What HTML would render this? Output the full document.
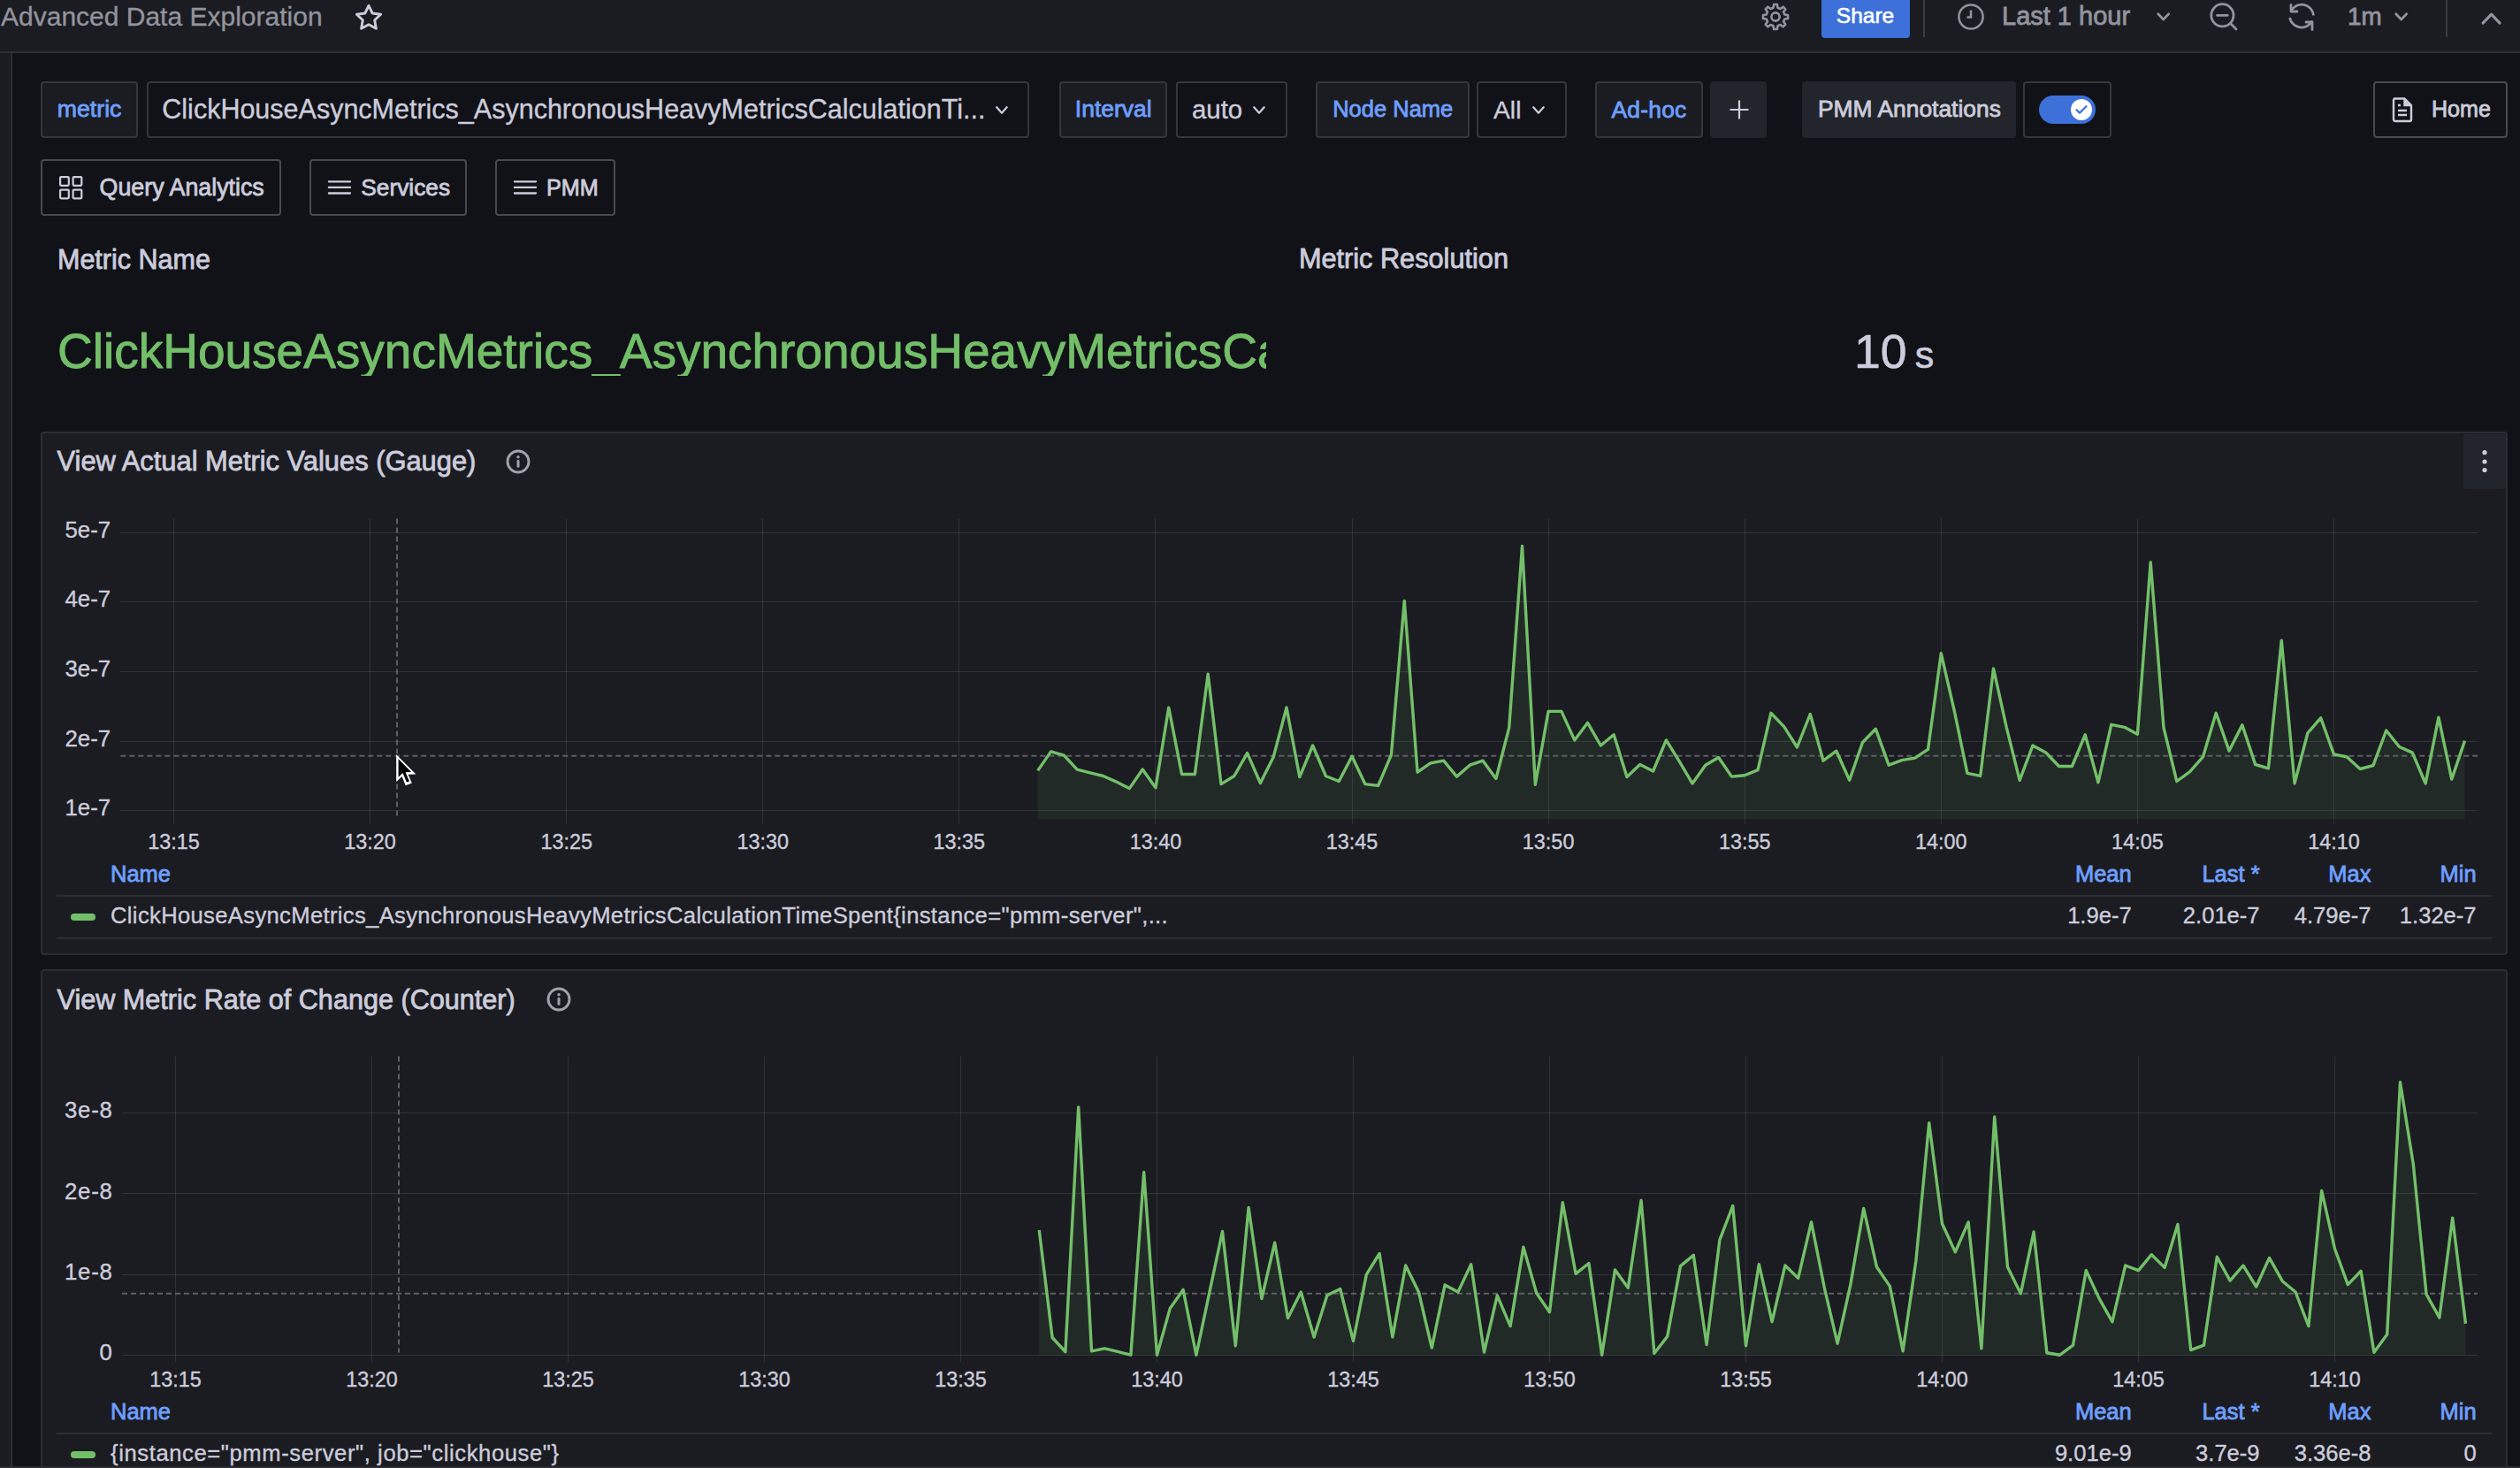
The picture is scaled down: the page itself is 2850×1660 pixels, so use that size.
<!DOCTYPE html>
<html><head><meta charset="utf-8"><style>
html,body{margin:0;padding:0;}
body{width:2850px;height:1660px;overflow:hidden;position:relative;background:#111217;font-family:"Liberation Sans",sans-serif;}
.t{position:absolute;white-space:nowrap;line-height:1;}
.r{position:absolute;}
svg.r{overflow:visible;}
</style></head><body>
<div class="r" style="left:0.00px;top:0.00px;width:2850.00px;height:58.00px;background:#1b1c21;"></div>
<div class="r" style="left:0.00px;top:58.00px;width:2850.00px;height:2.00px;background:#2c2e35;"></div>
<div class="r" style="left:0.00px;top:60.00px;width:12.00px;height:1600.00px;background:#1b1c21;"></div>
<div class="r" style="left:12.00px;top:60.00px;width:2.00px;height:1600.00px;background:#2c2e35;"></div>
<div class="r" style="left:0.00px;top:1658.00px;width:2850.00px;height:2.00px;background:#2c2d33;"></div>
<div class="t" style="top:4.00px;font-size:30.00px;color:#92939e;-webkit-text-stroke:0.35px #92939e;left:1.00px;">Advanced Data Exploration</div>
<svg class="r" style="left:399px;top:3px" width="36" height="33" viewBox="0 0 36 33"><path d="M18 3.4 L22.2 12 L31.6 13.3 L24.7 19.8 L26.4 29.2 L18 24.7 L9.6 29.2 L11.3 19.8 L4.4 13.3 L13.8 12 Z" fill="none" stroke="#ccccdc" stroke-width="2.9" stroke-linejoin="round"/></svg>
<svg class="r" style="left:1987.5px;top:-1.25px" width="40" height="40"><path d="M30.31 17.53 L34.07 18.11 L34.07 21.89 L30.31 22.47 L29.04 25.54 L31.29 28.61 L28.61 31.29 L25.54 29.04 L22.47 30.31 L21.89 34.07 L18.11 34.07 L17.53 30.31 L14.46 29.04 L11.39 31.29 L8.71 28.61 L10.96 25.54 L9.69 22.47 L5.93 21.89 L5.93 18.11 L9.69 17.53 L10.96 14.46 L8.71 11.39 L11.39 8.71 L14.46 10.96 L17.53 9.69 L18.11 5.93 L21.89 5.93 L22.47 9.69 L25.54 10.96 L28.61 8.71 L31.29 11.39 L29.04 14.46 Z" fill="none" stroke="#92939e" stroke-width="2.6" stroke-linejoin="round"/><circle cx="20" cy="20" r="4.6" fill="none" stroke="#92939e" stroke-width="2.6"/></svg>
<div class="r" style="left:2060.00px;top:0.00px;width:100.00px;height:43.00px;background:#3d71d9;border-radius:0 0 4px 4px;"></div>
<div class="t" style="top:6.36px;font-size:24.50px;color:#ffffff;-webkit-text-stroke:0.6px #ffffff;left:2109.50px;transform:translateX(-50%);">Share</div>
<div class="r" style="left:2175.00px;top:0.00px;width:2.00px;height:42.00px;background:#3a3b41;"></div>
<svg class="r" style="left:2213px;top:3px" width="32" height="32" viewBox="0 0 32 32"><circle cx="16" cy="16" r="13.6" fill="none" stroke="#92939e" stroke-width="2.5"/><path d="M16 8.5 V16.5 H11.5" fill="none" stroke="#92939e" stroke-width="2.5"/></svg>
<div class="t" style="top:4.45px;font-size:29.00px;color:#92939e;-webkit-text-stroke:0.8px #92939e;left:2264.00px;">Last 1 hour</div>
<svg class="r" style="left:2438.3px;top:12.8px" width="17.4" height="11.7"><path d="M2.7 2.7 L8.7 9.0 L14.7 2.7" fill="none" stroke="#92939e" stroke-width="2.7" stroke-linecap="round" stroke-linejoin="round"/></svg>
<svg class="r" style="left:2496px;top:0px" width="40" height="40" viewBox="0 0 40 40"><circle cx="17.4" cy="17.3" r="12.6" fill="none" stroke="#92939e" stroke-width="2.8"/><path d="M11.5 17.3 H23.3 M26.6 26.6 L33 33" fill="none" stroke="#92939e" stroke-width="2.8" stroke-linecap="round"/></svg>
<svg class="r" style="left:2585px;top:1px" width="36" height="36" viewBox="0 0 36 36"><path d="M6 11.5 A13.5 13.5 0 0 1 31.5 16.5" fill="none" stroke="#92939e" stroke-width="2.8"/><path d="M30 22.5 A13.5 13.5 0 0 1 4.6 19" fill="none" stroke="#92939e" stroke-width="2.8"/><path d="M6 4.5 V12 H13" fill="none" stroke="#92939e" stroke-width="2.8" stroke-linejoin="round" stroke-linecap="round"/><path d="M30 32.5 V24 H23" fill="none" stroke="#92939e" stroke-width="2.8" stroke-linejoin="round" stroke-linecap="round"/></svg>
<div class="t" style="top:5.06px;font-size:27.80px;color:#92939e;-webkit-text-stroke:0.8px #92939e;left:2655.00px;">1m</div>
<svg class="r" style="left:2707.3px;top:12.8px" width="17.4" height="11.7"><path d="M2.7 2.7 L8.7 9.0 L14.7 2.7" fill="none" stroke="#92939e" stroke-width="2.7" stroke-linecap="round" stroke-linejoin="round"/></svg>
<div class="r" style="left:2766.00px;top:0.00px;width:2.00px;height:42.00px;background:#3a3b41;"></div>
<svg class="r" style="left:2805.4px;top:12.9px" width="25.2" height="16.2"><path d="M3.1 13.1 L12.6 3.1 L22.1 13.1" fill="none" stroke="#92939e" stroke-width="3.1" stroke-linecap="round" stroke-linejoin="round"/></svg>
<div class="r" style="left:46.00px;top:92.00px;width:110.00px;height:64.00px;background:#1b1c21;border:2px solid #34363d;box-sizing:border-box;border-radius:4px;"></div>
<div class="t" style="top:109.59px;font-size:26.70px;color:#6e9fff;-webkit-text-stroke:0.8px #6e9fff;left:64.80px;">metric</div>
<div class="r" style="left:166.00px;top:92.00px;width:998.00px;height:64.00px;background:#111217;border:2px solid #34363d;box-sizing:border-box;border-radius:4px;"></div>
<div class="t" style="top:108.38px;font-size:30.50px;color:#ccccdc;-webkit-text-stroke:0.35px #ccccdc;left:183.30px;">ClickHouseAsyncMetrics_AsynchronousHeavyMetricsCalculationTi...</div>
<svg class="r" style="left:1124.8px;top:118.8px" width="15.9" height="10.9"><path d="M2.2 2.2 L7.95 8.7 L13.7 2.2" fill="none" stroke="#ccccdc" stroke-width="2.2" stroke-linecap="round" stroke-linejoin="round"/></svg>
<div class="r" style="left:1198.00px;top:92.00px;width:122.00px;height:64.00px;background:#1b1c21;border:2px solid #34363d;box-sizing:border-box;border-radius:4px;"></div>
<div class="t" style="top:109.76px;font-size:26.50px;color:#6e9fff;-webkit-text-stroke:0.8px #6e9fff;left:1215.80px;">Interval</div>
<div class="r" style="left:1330.00px;top:92.00px;width:126.00px;height:64.00px;background:#111217;border:2px solid #34363d;box-sizing:border-box;border-radius:4px;"></div>
<div class="t" style="top:109.31px;font-size:29.40px;color:#ccccdc;-webkit-text-stroke:0.35px #ccccdc;left:1348.00px;">auto</div>
<svg class="r" style="left:1416.3px;top:118.8px" width="15.9" height="10.9"><path d="M2.2 2.2 L7.95 8.7 L13.7 2.2" fill="none" stroke="#ccccdc" stroke-width="2.2" stroke-linecap="round" stroke-linejoin="round"/></svg>
<div class="r" style="left:1488.00px;top:92.00px;width:174.00px;height:64.00px;background:#1b1c21;border:2px solid #34363d;box-sizing:border-box;border-radius:4px;"></div>
<div class="t" style="top:110.61px;font-size:25.50px;color:#6e9fff;-webkit-text-stroke:0.8px #6e9fff;left:1507.20px;">Node Name</div>
<div class="r" style="left:1670.00px;top:92.00px;width:102.00px;height:64.00px;background:#111217;border:2px solid #34363d;box-sizing:border-box;border-radius:4px;"></div>
<div class="t" style="top:110.24px;font-size:28.30px;color:#ccccdc;-webkit-text-stroke:0.35px #ccccdc;left:1689.00px;">All</div>
<svg class="r" style="left:1732.3px;top:118.8px" width="15.9" height="10.9"><path d="M2.2 2.2 L7.95 8.7 L13.7 2.2" fill="none" stroke="#ccccdc" stroke-width="2.2" stroke-linecap="round" stroke-linejoin="round"/></svg>
<div class="r" style="left:1804.00px;top:92.00px;width:122.00px;height:64.00px;background:#1b1c21;border:2px solid #34363d;box-sizing:border-box;border-radius:4px;"></div>
<div class="t" style="top:110.65px;font-size:26.40px;color:#6e9fff;-webkit-text-stroke:0.8px #6e9fff;letter-spacing:0.25px;left:1822.40px;">Ad-hoc</div>
<div class="r" style="left:1934.00px;top:92.00px;width:64.00px;height:64.00px;background:#22252b;border-radius:4px;"></div>
<svg class="r" style="left:1956px;top:113px" width="22" height="22"><path d="M11 0.5 V21.5 M0.5 11 H21.5" stroke="#ccccdc" stroke-width="2.2"/></svg>
<div class="r" style="left:2038.00px;top:92.00px;width:242.00px;height:64.00px;background:#22252b;border-radius:4px;"></div>
<div class="t" style="top:109.85px;font-size:26.40px;color:#ccccdc;-webkit-text-stroke:0.8px #ccccdc;left:2056.00px;">PMM Annotations</div>
<div class="r" style="left:2288.00px;top:92.00px;width:100.00px;height:64.00px;background:#111217;border:2px solid #34363d;box-sizing:border-box;border-radius:4px;"></div>
<div class="r" style="left:2306.00px;top:108.00px;width:64.00px;height:32.00px;background:#3d71d9;border-radius:16px;"></div>
<svg class="r" style="left:2341px;top:111px" width="26" height="26" viewBox="0 0 26 26"><circle cx="13" cy="13" r="12" fill="#ffffff"/><path d="M7.5 13.3 L11 16.6 L18.5 9.2" fill="none" stroke="#3d71d9" stroke-width="2.2" stroke-linecap="round" stroke-linejoin="round"/></svg>
<div class="r" style="left:2684.00px;top:92.00px;width:152.00px;height:64.00px;background:#111217;border:2px solid #484951;box-sizing:border-box;border-radius:4px;"></div>
<svg class="r" style="left:2704px;top:109px" width="26" height="30" viewBox="0 0 26 30"><path d="M4 2.5 H15.5 L23 10 V26 A2 2 0 0 1 21 28 H5 A2 2 0 0 1 3 26 V4.5 A2 2 0 0 1 5 2.5 Z" fill="none" stroke="#ccccdc" stroke-width="2.4" stroke-linejoin="round"/><path d="M15 3 V10.5 H22.5" fill="#ccccdc" stroke="#ccccdc" stroke-width="1.5"/><path d="M8 10 H11 M8 16 H18 M8 21 H18" stroke="#ccccdc" stroke-width="2.4"/></svg>
<div class="t" style="top:111.05px;font-size:25.10px;color:#ccccdc;-webkit-text-stroke:0.8px #ccccdc;left:2750.00px;">Home</div>
<div class="r" style="left:46.00px;top:180.00px;width:272.00px;height:64.00px;border:2px solid #484951;box-sizing:border-box;border-radius:4px;"></div>
<svg class="r" style="left:67px;top:199px" width="28" height="28" viewBox="0 0 28 28"><rect x="1.1" y="1.1" width="9.7" height="9.7" rx="1" fill="none" stroke="#ccccdc" stroke-width="2.2"/><rect x="15.6" y="1.1" width="9.7" height="9.7" rx="1" fill="none" stroke="#ccccdc" stroke-width="2.2"/><rect x="1.1" y="15.6" width="9.7" height="9.7" rx="1" fill="none" stroke="#ccccdc" stroke-width="2.2"/><rect x="15.6" y="15.6" width="9.7" height="9.7" rx="1" fill="none" stroke="#ccccdc" stroke-width="2.2"/></svg>
<div class="t" style="top:198.61px;font-size:26.80px;color:#ccccdc;-webkit-text-stroke:0.8px #ccccdc;left:112.60px;">Query Analytics</div>
<div class="r" style="left:350.00px;top:180.00px;width:178.00px;height:64.00px;border:2px solid #484951;box-sizing:border-box;border-radius:4px;"></div>
<svg class="r" style="left:370px;top:202px" width="28" height="20"><path d="M1.9 3.3 H26 M1.9 9.9 H26 M1.9 16.5 H26" stroke="#ccccdc" stroke-width="2.3" stroke-linecap="round"/></svg>
<div class="t" style="top:199.03px;font-size:26.30px;color:#ccccdc;-webkit-text-stroke:0.8px #ccccdc;left:408.30px;">Services</div>
<div class="r" style="left:560.00px;top:180.00px;width:136.00px;height:64.00px;border:2px solid #484951;box-sizing:border-box;border-radius:4px;"></div>
<svg class="r" style="left:580px;top:202px" width="28" height="20"><path d="M1.9 3.3 H26 M1.9 9.9 H26 M1.9 16.5 H26" stroke="#ccccdc" stroke-width="2.3" stroke-linecap="round"/></svg>
<div class="t" style="top:199.96px;font-size:25.20px;color:#ccccdc;-webkit-text-stroke:0.8px #ccccdc;left:617.90px;">PMM</div>
<div class="t" style="top:278.18px;font-size:30.50px;color:#ccccdc;-webkit-text-stroke:0.8px #ccccdc;left:65.00px;">Metric Name</div>
<div class="t" style="top:369.83px;font-size:55.00px;color:#73bf69;-webkit-text-stroke:0.9px #73bf69;left:65.00px;width:1367px;overflow:hidden;">ClickHouseAsyncMetrics_AsynchronousHeavyMetricsCalculationTimeSpent</div>
<div class="t" style="top:278.31px;font-size:30.70px;color:#ccccdc;-webkit-text-stroke:0.8px #ccccdc;left:1468.90px;">Metric Resolution</div>
<div class="t" style="left:2096.9px;top:371.4px;font-size:53.5px;line-height:1;color:#ccccdc;-webkit-text-stroke:0.6px #ccccdc">10<span style="font-size:43px;margin-left:9.4px">s</span></div>
<div class="r" style="left:46.00px;top:488.00px;width:2790.00px;height:592.00px;background:#1b1c21;border:2px solid #2b2d33;box-sizing:border-box;border-radius:4px;"></div>
<div class="r" style="left:46.00px;top:1096.00px;width:2790.00px;height:604.00px;background:#1b1c21;border:2px solid #2b2d33;box-sizing:border-box;border-radius:4px;"></div>
<svg class="r" style="left:0;top:0" width="2850" height="1660" viewBox="0 0 2850 1660"><line x1="136.3" y1="602.5" x2="2802" y2="602.5" stroke="rgba(204,204,220,0.13)" stroke-width="1"/><line x1="136.3" y1="680.5" x2="2802" y2="680.5" stroke="rgba(204,204,220,0.13)" stroke-width="1"/><line x1="136.3" y1="759.5" x2="2802" y2="759.5" stroke="rgba(204,204,220,0.13)" stroke-width="1"/><line x1="136.3" y1="838.5" x2="2802" y2="838.5" stroke="rgba(204,204,220,0.13)" stroke-width="1"/><line x1="136.3" y1="916.5" x2="2802" y2="916.5" stroke="rgba(204,204,220,0.13)" stroke-width="1"/><line x1="196.5" y1="586.6" x2="196.5" y2="932.2" stroke="rgba(204,204,220,0.13)" stroke-width="1"/><line x1="418.5" y1="586.6" x2="418.5" y2="932.2" stroke="rgba(204,204,220,0.13)" stroke-width="1"/><line x1="640.5" y1="586.6" x2="640.5" y2="932.2" stroke="rgba(204,204,220,0.13)" stroke-width="1"/><line x1="862.5" y1="586.6" x2="862.5" y2="932.2" stroke="rgba(204,204,220,0.13)" stroke-width="1"/><line x1="1084.5" y1="586.6" x2="1084.5" y2="932.2" stroke="rgba(204,204,220,0.13)" stroke-width="1"/><line x1="1306.5" y1="586.6" x2="1306.5" y2="932.2" stroke="rgba(204,204,220,0.13)" stroke-width="1"/><line x1="1529.5" y1="586.6" x2="1529.5" y2="932.2" stroke="rgba(204,204,220,0.13)" stroke-width="1"/><line x1="1751.5" y1="586.6" x2="1751.5" y2="932.2" stroke="rgba(204,204,220,0.13)" stroke-width="1"/><line x1="1973.5" y1="586.6" x2="1973.5" y2="932.2" stroke="rgba(204,204,220,0.13)" stroke-width="1"/><line x1="2195.5" y1="586.6" x2="2195.5" y2="932.2" stroke="rgba(204,204,220,0.13)" stroke-width="1"/><line x1="2417.5" y1="586.6" x2="2417.5" y2="932.2" stroke="rgba(204,204,220,0.13)" stroke-width="1"/><line x1="2639.5" y1="586.6" x2="2639.5" y2="932.2" stroke="rgba(204,204,220,0.13)" stroke-width="1"/><polygon points="1173.70,926 1173.70,871.40 1188.51,849.90 1203.31,854.20 1218.12,870.10 1232.92,873.80 1247.73,877.50 1262.54,884.10 1277.34,891.60 1292.15,870.00 1306.95,890.80 1321.76,800.10 1336.57,875.50 1351.37,875.50 1366.18,762.10 1380.98,886.60 1395.79,877.50 1410.60,851.60 1425.40,885.50 1440.21,855.90 1455.01,800.10 1469.82,878.60 1484.63,843.00 1499.43,877.50 1514.24,883.50 1529.04,855.30 1543.85,886.60 1558.66,888.40 1573.46,853.50 1588.27,679.50 1603.07,873.20 1617.88,862.80 1632.69,860.20 1647.49,878.10 1662.30,865.20 1677.10,860.20 1691.91,880.50 1706.72,822.80 1721.52,617.40 1736.33,887.20 1751.13,804.40 1765.94,804.40 1780.75,836.90 1795.55,817.30 1810.36,843.00 1825.16,830.80 1839.97,878.60 1854.78,864.60 1869.58,872.00 1884.39,836.90 1899.19,860.80 1914.00,885.90 1928.81,865.20 1943.61,856.50 1958.42,878.10 1973.22,876.80 1988.03,870.60 2002.84,806.30 2017.64,821.60 2032.45,845.00 2047.25,807.50 2062.06,860.20 2076.87,849.20 2091.67,882.30 2106.48,839.50 2121.28,824.20 2136.09,865.10 2150.90,859.60 2165.70,857.10 2180.51,847.30 2195.31,738.80 2210.12,803.20 2224.93,874.30 2239.73,877.40 2254.54,756.00 2269.34,822.80 2284.15,882.30 2298.96,843.00 2313.76,851.00 2328.57,866.50 2343.37,866.50 2358.18,830.80 2372.99,884.70 2387.79,819.30 2402.60,822.30 2417.40,830.30 2432.21,635.80 2447.02,822.80 2461.82,883.50 2476.63,872.60 2491.43,855.90 2506.24,806.30 2521.05,849.10 2535.85,819.70 2550.66,864.50 2565.46,868.80 2580.27,724.10 2595.08,885.90 2609.88,828.90 2624.69,811.90 2639.49,853.00 2654.30,855.90 2669.11,869.50 2683.91,865.70 2698.72,826.00 2713.52,844.50 2728.33,851.10 2743.14,886.00 2757.94,811.20 2772.75,881.10 2787.55,837.60 2787.55,926" fill="rgba(115,191,105,0.09)"/><line x1="136.3" y1="854.8" x2="2802" y2="854.8" stroke="#5d5e65" stroke-width="2" stroke-dasharray="6 4"/><line x1="449" y1="586.6" x2="449" y2="923" stroke="#5d5e65" stroke-width="2" stroke-dasharray="6 4"/><polyline points="1173.70,871.40 1188.51,849.90 1203.31,854.20 1218.12,870.10 1232.92,873.80 1247.73,877.50 1262.54,884.10 1277.34,891.60 1292.15,870.00 1306.95,890.80 1321.76,800.10 1336.57,875.50 1351.37,875.50 1366.18,762.10 1380.98,886.60 1395.79,877.50 1410.60,851.60 1425.40,885.50 1440.21,855.90 1455.01,800.10 1469.82,878.60 1484.63,843.00 1499.43,877.50 1514.24,883.50 1529.04,855.30 1543.85,886.60 1558.66,888.40 1573.46,853.50 1588.27,679.50 1603.07,873.20 1617.88,862.80 1632.69,860.20 1647.49,878.10 1662.30,865.20 1677.10,860.20 1691.91,880.50 1706.72,822.80 1721.52,617.40 1736.33,887.20 1751.13,804.40 1765.94,804.40 1780.75,836.90 1795.55,817.30 1810.36,843.00 1825.16,830.80 1839.97,878.60 1854.78,864.60 1869.58,872.00 1884.39,836.90 1899.19,860.80 1914.00,885.90 1928.81,865.20 1943.61,856.50 1958.42,878.10 1973.22,876.80 1988.03,870.60 2002.84,806.30 2017.64,821.60 2032.45,845.00 2047.25,807.50 2062.06,860.20 2076.87,849.20 2091.67,882.30 2106.48,839.50 2121.28,824.20 2136.09,865.10 2150.90,859.60 2165.70,857.10 2180.51,847.30 2195.31,738.80 2210.12,803.20 2224.93,874.30 2239.73,877.40 2254.54,756.00 2269.34,822.80 2284.15,882.30 2298.96,843.00 2313.76,851.00 2328.57,866.50 2343.37,866.50 2358.18,830.80 2372.99,884.70 2387.79,819.30 2402.60,822.30 2417.40,830.30 2432.21,635.80 2447.02,822.80 2461.82,883.50 2476.63,872.60 2491.43,855.90 2506.24,806.30 2521.05,849.10 2535.85,819.70 2550.66,864.50 2565.46,868.80 2580.27,724.10 2595.08,885.90 2609.88,828.90 2624.69,811.90 2639.49,853.00 2654.30,855.90 2669.11,869.50 2683.91,865.70 2698.72,826.00 2713.52,844.50 2728.33,851.10 2743.14,886.00 2757.94,811.20 2772.75,881.10 2787.55,837.60" fill="none" stroke="#73bf69" stroke-width="3.4" stroke-linejoin="round" stroke-linecap="butt"/><line x1="138" y1="1258.5" x2="2802" y2="1258.5" stroke="rgba(204,204,220,0.13)" stroke-width="1"/><line x1="138" y1="1349.5" x2="2802" y2="1349.5" stroke="rgba(204,204,220,0.13)" stroke-width="1"/><line x1="138" y1="1441.5" x2="2802" y2="1441.5" stroke="rgba(204,204,220,0.13)" stroke-width="1"/><line x1="138" y1="1532.5" x2="2802" y2="1532.5" stroke="rgba(204,204,220,0.13)" stroke-width="1"/><line x1="198.5" y1="1194.5" x2="198.5" y2="1540.2" stroke="rgba(204,204,220,0.13)" stroke-width="1"/><line x1="420.5" y1="1194.5" x2="420.5" y2="1540.2" stroke="rgba(204,204,220,0.13)" stroke-width="1"/><line x1="642.5" y1="1194.5" x2="642.5" y2="1540.2" stroke="rgba(204,204,220,0.13)" stroke-width="1"/><line x1="864.5" y1="1194.5" x2="864.5" y2="1540.2" stroke="rgba(204,204,220,0.13)" stroke-width="1"/><line x1="1086.5" y1="1194.5" x2="1086.5" y2="1540.2" stroke="rgba(204,204,220,0.13)" stroke-width="1"/><line x1="1308.5" y1="1194.5" x2="1308.5" y2="1540.2" stroke="rgba(204,204,220,0.13)" stroke-width="1"/><line x1="1530.5" y1="1194.5" x2="1530.5" y2="1540.2" stroke="rgba(204,204,220,0.13)" stroke-width="1"/><line x1="1752.5" y1="1194.5" x2="1752.5" y2="1540.2" stroke="rgba(204,204,220,0.13)" stroke-width="1"/><line x1="1974.5" y1="1194.5" x2="1974.5" y2="1540.2" stroke="rgba(204,204,220,0.13)" stroke-width="1"/><line x1="2196.5" y1="1194.5" x2="2196.5" y2="1540.2" stroke="rgba(204,204,220,0.13)" stroke-width="1"/><line x1="2418.5" y1="1194.5" x2="2418.5" y2="1540.2" stroke="rgba(204,204,220,0.13)" stroke-width="1"/><line x1="2640.5" y1="1194.5" x2="2640.5" y2="1540.2" stroke="rgba(204,204,220,0.13)" stroke-width="1"/><polygon points="1175.30,1532.5 1175.30,1391.10 1190.10,1512.50 1204.90,1528.60 1219.70,1251.90 1234.50,1527.80 1249.30,1524.90 1264.10,1528.40 1278.90,1532.20 1293.70,1325.50 1308.50,1532.20 1323.30,1479.40 1338.10,1458.40 1352.90,1532.20 1367.70,1462.20 1382.50,1392.50 1397.30,1521.70 1412.10,1365.50 1426.90,1468.50 1441.70,1405.20 1456.50,1490.50 1471.30,1461.10 1486.10,1511.90 1500.90,1464.70 1515.70,1457.50 1530.50,1516.30 1545.30,1441.40 1560.10,1417.50 1574.90,1511.90 1589.70,1431.00 1604.50,1461.00 1619.30,1524.10 1634.10,1453.00 1648.90,1461.10 1663.70,1429.70 1678.50,1529.00 1693.30,1464.80 1708.10,1499.60 1722.90,1410.10 1737.70,1462.20 1752.50,1483.70 1767.30,1359.80 1782.10,1440.30 1796.90,1428.50 1811.70,1532.20 1826.50,1435.90 1841.30,1456.20 1856.10,1357.40 1870.90,1530.30 1885.70,1511.30 1900.50,1431.60 1915.30,1419.40 1930.10,1520.50 1944.90,1402.10 1959.70,1363.50 1974.50,1521.70 1989.30,1429.70 2004.10,1494.70 2018.90,1431.00 2033.70,1445.20 2048.50,1381.90 2063.30,1456.10 2078.10,1519.20 2092.90,1452.40 2107.70,1366.50 2122.50,1432.80 2137.30,1454.40 2152.10,1527.80 2166.90,1425.40 2181.70,1269.80 2196.50,1383.70 2211.30,1415.70 2226.10,1381.90 2240.90,1524.90 2255.70,1263.00 2270.50,1432.80 2285.30,1462.80 2300.10,1393.00 2314.90,1529.70 2329.70,1532.20 2344.50,1521.10 2359.30,1436.60 2374.10,1468.40 2388.90,1494.70 2403.70,1431.00 2418.50,1436.60 2433.30,1418.70 2448.10,1433.40 2462.90,1384.40 2477.70,1526.60 2492.50,1521.10 2507.30,1421.20 2522.10,1448.10 2536.90,1431.00 2551.70,1455.00 2566.50,1422.40 2581.30,1448.70 2596.10,1461.00 2610.90,1499.60 2625.70,1346.40 2640.50,1412.00 2655.30,1452.60 2670.10,1437.20 2684.90,1529.20 2699.70,1508.90 2714.50,1223.70 2729.30,1316.40 2744.10,1463.60 2758.90,1489.90 2773.70,1377.10 2788.50,1496.70 2788.50,1532.5" fill="rgba(115,191,105,0.09)"/><line x1="138" y1="1462.8" x2="2802" y2="1462.8" stroke="#5d5e65" stroke-width="2" stroke-dasharray="6 4"/><line x1="451" y1="1194.5" x2="451" y2="1529.5" stroke="#5d5e65" stroke-width="2" stroke-dasharray="6 4"/><polyline points="1175.30,1391.10 1190.10,1512.50 1204.90,1528.60 1219.70,1251.90 1234.50,1527.80 1249.30,1524.90 1264.10,1528.40 1278.90,1532.20 1293.70,1325.50 1308.50,1532.20 1323.30,1479.40 1338.10,1458.40 1352.90,1532.20 1367.70,1462.20 1382.50,1392.50 1397.30,1521.70 1412.10,1365.50 1426.90,1468.50 1441.70,1405.20 1456.50,1490.50 1471.30,1461.10 1486.10,1511.90 1500.90,1464.70 1515.70,1457.50 1530.50,1516.30 1545.30,1441.40 1560.10,1417.50 1574.90,1511.90 1589.70,1431.00 1604.50,1461.00 1619.30,1524.10 1634.10,1453.00 1648.90,1461.10 1663.70,1429.70 1678.50,1529.00 1693.30,1464.80 1708.10,1499.60 1722.90,1410.10 1737.70,1462.20 1752.50,1483.70 1767.30,1359.80 1782.10,1440.30 1796.90,1428.50 1811.70,1532.20 1826.50,1435.90 1841.30,1456.20 1856.10,1357.40 1870.90,1530.30 1885.70,1511.30 1900.50,1431.60 1915.30,1419.40 1930.10,1520.50 1944.90,1402.10 1959.70,1363.50 1974.50,1521.70 1989.30,1429.70 2004.10,1494.70 2018.90,1431.00 2033.70,1445.20 2048.50,1381.90 2063.30,1456.10 2078.10,1519.20 2092.90,1452.40 2107.70,1366.50 2122.50,1432.80 2137.30,1454.40 2152.10,1527.80 2166.90,1425.40 2181.70,1269.80 2196.50,1383.70 2211.30,1415.70 2226.10,1381.90 2240.90,1524.90 2255.70,1263.00 2270.50,1432.80 2285.30,1462.80 2300.10,1393.00 2314.90,1529.70 2329.70,1532.20 2344.50,1521.10 2359.30,1436.60 2374.10,1468.40 2388.90,1494.70 2403.70,1431.00 2418.50,1436.60 2433.30,1418.70 2448.10,1433.40 2462.90,1384.40 2477.70,1526.60 2492.50,1521.10 2507.30,1421.20 2522.10,1448.10 2536.90,1431.00 2551.70,1455.00 2566.50,1422.40 2581.30,1448.70 2596.10,1461.00 2610.90,1499.60 2625.70,1346.40 2640.50,1412.00 2655.30,1452.60 2670.10,1437.20 2684.90,1529.20 2699.70,1508.90 2714.50,1223.70 2729.30,1316.40 2744.10,1463.60 2758.90,1489.90 2773.70,1377.10 2788.50,1496.70" fill="none" stroke="#73bf69" stroke-width="3.4" stroke-linejoin="round" stroke-linecap="butt"/></svg>
<div class="t" style="top:507.08px;font-size:30.85px;color:#ccccdc;-webkit-text-stroke:0.8px #ccccdc;left:64.60px;">View Actual Metric Values (Gauge)</div>
<svg class="r" style="left:570.7px;top:506.7px" width="30" height="30"><circle cx="15" cy="15" r="12" fill="none" stroke="#a0a1ab" stroke-width="2.9"/><path d="M15 14.2 V20.2" stroke="#a0a1ab" stroke-width="3" stroke-linecap="round"/><circle cx="15" cy="9.8" r="1.75" fill="#a0a1ab"/></svg>
<div class="t" style="top:1114.69px;font-size:30.60px;color:#ccccdc;-webkit-text-stroke:0.8px #ccccdc;left:64.60px;">View Metric Rate of Change (Counter)</div>
<svg class="r" style="left:616.7px;top:1114.7px" width="30" height="30"><circle cx="15" cy="15" r="12" fill="none" stroke="#a0a1ab" stroke-width="2.9"/><path d="M15 14.2 V20.2" stroke="#a0a1ab" stroke-width="3" stroke-linecap="round"/><circle cx="15" cy="9.8" r="1.75" fill="#a0a1ab"/></svg>
<div class="r" style="left:2785.80px;top:490.60px;width:48.60px;height:62.10px;background:#22252b;border-radius:3px;"></div>
<svg class="r" style="left:2804px;top:505px" width="12" height="34"><circle cx="6" cy="6.7" r="2.6" fill="#ccccdc"/><circle cx="6" cy="17" r="2.6" fill="#ccccdc"/><circle cx="6" cy="26.5" r="2.6" fill="#ccccdc"/></svg>
<div class="t" style="top:587.46px;font-size:25.80px;color:#ccccdc;-webkit-text-stroke:0.35px #ccccdc;right:2724.90px;">5e-7</div>
<div class="t" style="top:665.36px;font-size:25.80px;color:#ccccdc;-webkit-text-stroke:0.35px #ccccdc;right:2724.90px;">4e-7</div>
<div class="t" style="top:743.96px;font-size:25.80px;color:#ccccdc;-webkit-text-stroke:0.35px #ccccdc;right:2724.90px;">3e-7</div>
<div class="t" style="top:822.96px;font-size:25.80px;color:#ccccdc;-webkit-text-stroke:0.35px #ccccdc;right:2724.90px;">2e-7</div>
<div class="t" style="top:900.86px;font-size:25.80px;color:#ccccdc;-webkit-text-stroke:0.35px #ccccdc;right:2724.90px;">1e-7</div>
<div class="t" style="top:1243.46px;font-size:25.80px;color:#ccccdc;-webkit-text-stroke:0.35px #ccccdc;letter-spacing:0.7px;right:2722.50px;">3e-8</div>
<div class="t" style="top:1334.56px;font-size:25.80px;color:#ccccdc;-webkit-text-stroke:0.35px #ccccdc;letter-spacing:0.7px;right:2722.50px;">2e-8</div>
<div class="t" style="top:1426.06px;font-size:25.80px;color:#ccccdc;-webkit-text-stroke:0.35px #ccccdc;letter-spacing:0.7px;right:2722.50px;">1e-8</div>
<div class="t" style="top:1517.36px;font-size:25.80px;color:#ccccdc;-webkit-text-stroke:0.35px #ccccdc;right:2723.20px;">0</div>
<div class="t" style="top:941.19px;font-size:23.40px;color:#ccccdc;-webkit-text-stroke:0.35px #ccccdc;left:196.50px;transform:translateX(-50%);">13:15</div>
<div class="t" style="top:1548.79px;font-size:23.40px;color:#ccccdc;-webkit-text-stroke:0.35px #ccccdc;left:198.50px;transform:translateX(-50%);">13:15</div>
<div class="t" style="top:941.19px;font-size:23.40px;color:#ccccdc;-webkit-text-stroke:0.35px #ccccdc;left:418.59px;transform:translateX(-50%);">13:20</div>
<div class="t" style="top:1548.79px;font-size:23.40px;color:#ccccdc;-webkit-text-stroke:0.35px #ccccdc;left:420.50px;transform:translateX(-50%);">13:20</div>
<div class="t" style="top:941.19px;font-size:23.40px;color:#ccccdc;-webkit-text-stroke:0.35px #ccccdc;left:640.68px;transform:translateX(-50%);">13:25</div>
<div class="t" style="top:1548.79px;font-size:23.40px;color:#ccccdc;-webkit-text-stroke:0.35px #ccccdc;left:642.50px;transform:translateX(-50%);">13:25</div>
<div class="t" style="top:941.19px;font-size:23.40px;color:#ccccdc;-webkit-text-stroke:0.35px #ccccdc;left:862.77px;transform:translateX(-50%);">13:30</div>
<div class="t" style="top:1548.79px;font-size:23.40px;color:#ccccdc;-webkit-text-stroke:0.35px #ccccdc;left:864.50px;transform:translateX(-50%);">13:30</div>
<div class="t" style="top:941.19px;font-size:23.40px;color:#ccccdc;-webkit-text-stroke:0.35px #ccccdc;left:1084.86px;transform:translateX(-50%);">13:35</div>
<div class="t" style="top:1548.79px;font-size:23.40px;color:#ccccdc;-webkit-text-stroke:0.35px #ccccdc;left:1086.50px;transform:translateX(-50%);">13:35</div>
<div class="t" style="top:941.19px;font-size:23.40px;color:#ccccdc;-webkit-text-stroke:0.35px #ccccdc;left:1306.95px;transform:translateX(-50%);">13:40</div>
<div class="t" style="top:1548.79px;font-size:23.40px;color:#ccccdc;-webkit-text-stroke:0.35px #ccccdc;left:1308.50px;transform:translateX(-50%);">13:40</div>
<div class="t" style="top:941.19px;font-size:23.40px;color:#ccccdc;-webkit-text-stroke:0.35px #ccccdc;left:1529.04px;transform:translateX(-50%);">13:45</div>
<div class="t" style="top:1548.79px;font-size:23.40px;color:#ccccdc;-webkit-text-stroke:0.35px #ccccdc;left:1530.50px;transform:translateX(-50%);">13:45</div>
<div class="t" style="top:941.19px;font-size:23.40px;color:#ccccdc;-webkit-text-stroke:0.35px #ccccdc;left:1751.13px;transform:translateX(-50%);">13:50</div>
<div class="t" style="top:1548.79px;font-size:23.40px;color:#ccccdc;-webkit-text-stroke:0.35px #ccccdc;left:1752.50px;transform:translateX(-50%);">13:50</div>
<div class="t" style="top:941.19px;font-size:23.40px;color:#ccccdc;-webkit-text-stroke:0.35px #ccccdc;left:1973.22px;transform:translateX(-50%);">13:55</div>
<div class="t" style="top:1548.79px;font-size:23.40px;color:#ccccdc;-webkit-text-stroke:0.35px #ccccdc;left:1974.50px;transform:translateX(-50%);">13:55</div>
<div class="t" style="top:941.19px;font-size:23.40px;color:#ccccdc;-webkit-text-stroke:0.35px #ccccdc;left:2195.31px;transform:translateX(-50%);">14:00</div>
<div class="t" style="top:1548.79px;font-size:23.40px;color:#ccccdc;-webkit-text-stroke:0.35px #ccccdc;left:2196.50px;transform:translateX(-50%);">14:00</div>
<div class="t" style="top:941.19px;font-size:23.40px;color:#ccccdc;-webkit-text-stroke:0.35px #ccccdc;left:2417.40px;transform:translateX(-50%);">14:05</div>
<div class="t" style="top:1548.79px;font-size:23.40px;color:#ccccdc;-webkit-text-stroke:0.35px #ccccdc;left:2418.50px;transform:translateX(-50%);">14:05</div>
<div class="t" style="top:941.19px;font-size:23.40px;color:#ccccdc;-webkit-text-stroke:0.35px #ccccdc;left:2639.49px;transform:translateX(-50%);">14:10</div>
<div class="t" style="top:1548.79px;font-size:23.40px;color:#ccccdc;-webkit-text-stroke:0.35px #ccccdc;left:2640.50px;transform:translateX(-50%);">14:10</div>
<div class="t" style="top:976.41px;font-size:25.50px;color:#6e9fff;-webkit-text-stroke:0.8px #6e9fff;left:125.00px;">Name</div>
<div class="t" style="top:976.41px;font-size:25.50px;color:#6e9fff;-webkit-text-stroke:0.8px #6e9fff;right:439.30px;">Mean</div>
<div class="t" style="top:976.41px;font-size:25.50px;color:#6e9fff;-webkit-text-stroke:0.8px #6e9fff;right:294.40px;">Last *</div>
<div class="t" style="top:976.41px;font-size:25.50px;color:#6e9fff;-webkit-text-stroke:0.8px #6e9fff;right:168.50px;">Max</div>
<div class="t" style="top:976.41px;font-size:25.50px;color:#6e9fff;-webkit-text-stroke:0.8px #6e9fff;right:49.40px;">Min</div>
<div class="r" style="left:64.00px;top:1012.00px;width:2753.50px;height:2.00px;background:#2c2d33;"></div>
<div class="r" style="left:80.00px;top:1033.00px;width:28.00px;height:8.00px;background:#73bf69;border-radius:4px;"></div>
<div class="t" style="top:1023.12px;font-size:25.60px;color:#ccccdc;-webkit-text-stroke:0.35px #ccccdc;letter-spacing:0.34px;left:125.00px;">ClickHouseAsyncMetrics_AsynchronousHeavyMetricsCalculationTimeSpent{instance="pmm-server",...</div>
<div class="t" style="top:1023.12px;font-size:25.60px;color:#ccccdc;-webkit-text-stroke:0.35px #ccccdc;right:439.30px;">1.9e-7</div>
<div class="t" style="top:1023.12px;font-size:25.60px;color:#ccccdc;-webkit-text-stroke:0.35px #ccccdc;right:294.40px;">2.01e-7</div>
<div class="t" style="top:1023.12px;font-size:25.60px;color:#ccccdc;-webkit-text-stroke:0.35px #ccccdc;right:168.50px;">4.79e-7</div>
<div class="t" style="top:1023.12px;font-size:25.60px;color:#ccccdc;-webkit-text-stroke:0.35px #ccccdc;right:49.40px;">1.32e-7</div>
<div class="r" style="left:64.00px;top:1060.00px;width:2753.50px;height:2.00px;background:#2c2d33;"></div>
<div class="t" style="top:1583.91px;font-size:25.50px;color:#6e9fff;-webkit-text-stroke:0.8px #6e9fff;left:125.00px;">Name</div>
<div class="t" style="top:1583.91px;font-size:25.50px;color:#6e9fff;-webkit-text-stroke:0.8px #6e9fff;right:439.30px;">Mean</div>
<div class="t" style="top:1583.91px;font-size:25.50px;color:#6e9fff;-webkit-text-stroke:0.8px #6e9fff;right:294.40px;">Last *</div>
<div class="t" style="top:1583.91px;font-size:25.50px;color:#6e9fff;-webkit-text-stroke:0.8px #6e9fff;right:168.50px;">Max</div>
<div class="t" style="top:1583.91px;font-size:25.50px;color:#6e9fff;-webkit-text-stroke:0.8px #6e9fff;right:49.40px;">Min</div>
<div class="r" style="left:64.00px;top:1620.00px;width:2753.50px;height:2.00px;background:#2c2d33;"></div>
<div class="r" style="left:80.00px;top:1641.00px;width:28.00px;height:8.00px;background:#73bf69;border-radius:4px;"></div>
<div class="t" style="top:1630.92px;font-size:25.60px;color:#ccccdc;-webkit-text-stroke:0.35px #ccccdc;letter-spacing:0.6px;left:125.00px;">{instance="pmm-server", job="clickhouse"}</div>
<div class="t" style="top:1630.92px;font-size:25.60px;color:#ccccdc;-webkit-text-stroke:0.35px #ccccdc;right:439.30px;">9.01e-9</div>
<div class="t" style="top:1630.92px;font-size:25.60px;color:#ccccdc;-webkit-text-stroke:0.35px #ccccdc;right:294.40px;">3.7e-9</div>
<div class="t" style="top:1630.92px;font-size:25.60px;color:#ccccdc;-webkit-text-stroke:0.35px #ccccdc;right:168.50px;">3.36e-8</div>
<div class="t" style="top:1630.92px;font-size:25.60px;color:#ccccdc;-webkit-text-stroke:0.35px #ccccdc;right:49.40px;">0</div>
<div class="r" style="left:0.00px;top:1658.00px;width:2850.00px;height:2.00px;background:#2c2d33;"></div>
<svg class="r" style="left:446px;top:851px" width="30" height="42" viewBox="0 0 30 42"><path d="M2.2 2.2 V33 L8.6 27 L12.7 37.2 L19.8 34.4 L15.6 24.7 L24.4 24.5 Z" fill="#ffffff"/><path d="M4.6 7.2 V27.7 L9.5 23.1 L13.9 33.6 L17 32.4 L12.5 22.2 L19.1 22.1 Z" fill="#000000"/></svg>
</body></html>
